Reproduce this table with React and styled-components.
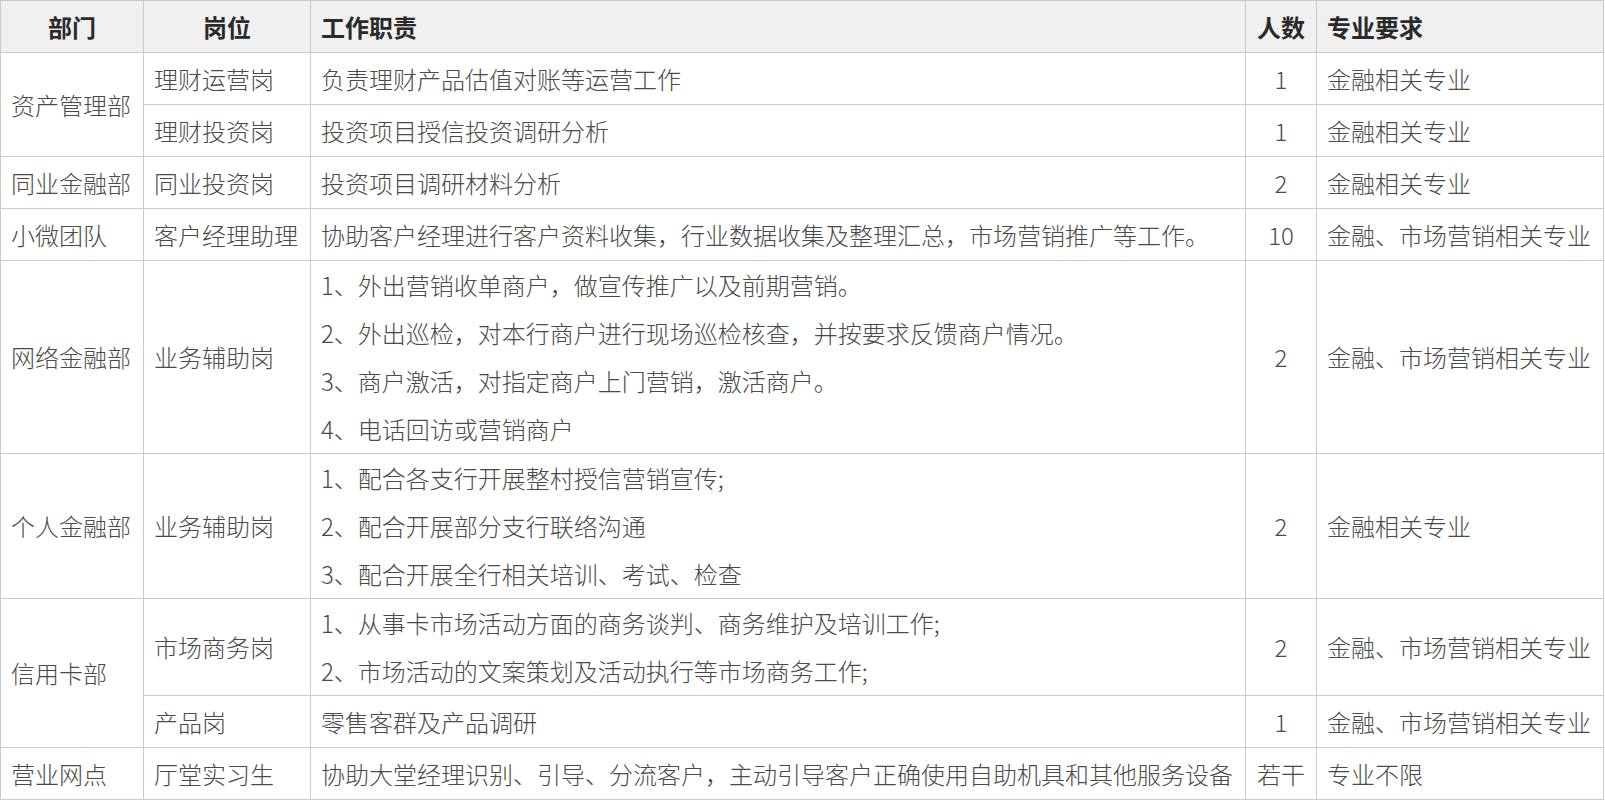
import React from 'react';
import styled, { createGlobalStyle } from 'styled-components';

const GlobalStyle = createGlobalStyle`
  html, body {
    margin: 0;
    padding: 0;
    background: #fff;
  }
  body {
    font-family: "Noto Sans CJK SC", "Noto Sans", sans-serif;
    color: #333;
  }
`;

const Table = styled.table`
  width: 1603px;
  table-layout: fixed;
  border-collapse: collapse;
  font-size: 24px;
  line-height: 36px;
  font-weight: 300;
  color: #4a4a4a;
`;

const HeadCell = styled.th`
  background: #f0f0f0;
  border: 1px solid #c9c9c9;
  padding: 6px 10px;
  font-weight: 700;
  color: #2a2a2a;
  text-align: ${props => props.align || 'center'};
  white-space: nowrap;
`;

const Row = styled.tr`
  height: 52px;
`;

const Cell = styled.td`
  border: 1px solid #c9c9c9;
  padding: 6px 10px;
  text-align: ${props => props.align || 'left'};
  vertical-align: middle;
  white-space: nowrap;
`;

const Line = styled.div`
  & + & {
    margin-top: 12px;
  }
`;

const columns = [
  { label: '部门', width: 143, align: 'center' },
  { label: '岗位', width: 167, align: 'center' },
  { label: '工作职责', width: 935, align: 'left' },
  { label: '人数', width: 71, align: 'center' },
  { label: '专业要求', width: 287, align: 'left' }
];

const rows = [
  { dept: '资产管理部', span: 2, post: '理财运营岗', duty: ['负责理财产品估值对账等运营工作'], count: '1', major: '金融相关专业' },
  { post: '理财投资岗', duty: ['投资项目授信投资调研分析'], count: '1', major: '金融相关专业' },
  { dept: '同业金融部', post: '同业投资岗', duty: ['投资项目调研材料分析'], count: '2', major: '金融相关专业' },
  { dept: '小微团队', post: '客户经理助理', duty: ['协助客户经理进行客户资料收集，行业数据收集及整理汇总，市场营销推广等工作。'], count: '10', major: '金融、市场营销相关专业' },
  {
    dept: '网络金融部',
    post: '业务辅助岗',
    duty: [
      '1、外出营销收单商户，做宣传推广以及前期营销。',
      '2、外出巡检，对本行商户进行现场巡检核查，并按要求反馈商户情况。',
      '3、商户激活，对指定商户上门营销，激活商户。',
      '4、电话回访或营销商户'
    ],
    count: '2',
    major: '金融、市场营销相关专业'
  },
  {
    dept: '个人金融部',
    post: '业务辅助岗',
    duty: [
      '1、配合各支行开展整村授信营销宣传;',
      '2、配合开展部分支行联络沟通',
      '3、配合开展全行相关培训、考试、检查'
    ],
    count: '2',
    major: '金融相关专业'
  },
  {
    dept: '信用卡部',
    span: 2,
    post: '市场商务岗',
    duty: [
      '1、从事卡市场活动方面的商务谈判、商务维护及培训工作;',
      '2、市场活动的文案策划及活动执行等市场商务工作;'
    ],
    count: '2',
    major: '金融、市场营销相关专业'
  },
  { post: '产品岗', duty: ['零售客群及产品调研'], count: '1', major: '金融、市场营销相关专业' },
  { dept: '营业网点', post: '厅堂实习生', duty: ['协助大堂经理识别、引导、分流客户，主动引导客户正确使用自助机具和其他服务设备'], count: '若干', major: '专业不限' }
];

function App() {
  return (
    <>
      <GlobalStyle />
      <Table>
        <colgroup>
          {columns.map(col => (
            <col key={col.label} style={{ width: col.width }} />
          ))}
        </colgroup>
        <thead>
          <Row>
            {columns.map(col => (
              <HeadCell key={col.label} align={col.align}>{col.label}</HeadCell>
            ))}
          </Row>
        </thead>
        <tbody>
          {rows.map((row, i) => (
            <Row key={i}>
              {row.dept && <Cell rowSpan={row.span || 1}>{row.dept}</Cell>}
              <Cell>{row.post}</Cell>
              <Cell>
                {row.duty.map(line => (
                  <Line key={line}>{line}</Line>
                ))}
              </Cell>
              <Cell align="center">{row.count}</Cell>
              <Cell>{row.major}</Cell>
            </Row>
          ))}
        </tbody>
      </Table>
    </>
  );
}

export default App;
